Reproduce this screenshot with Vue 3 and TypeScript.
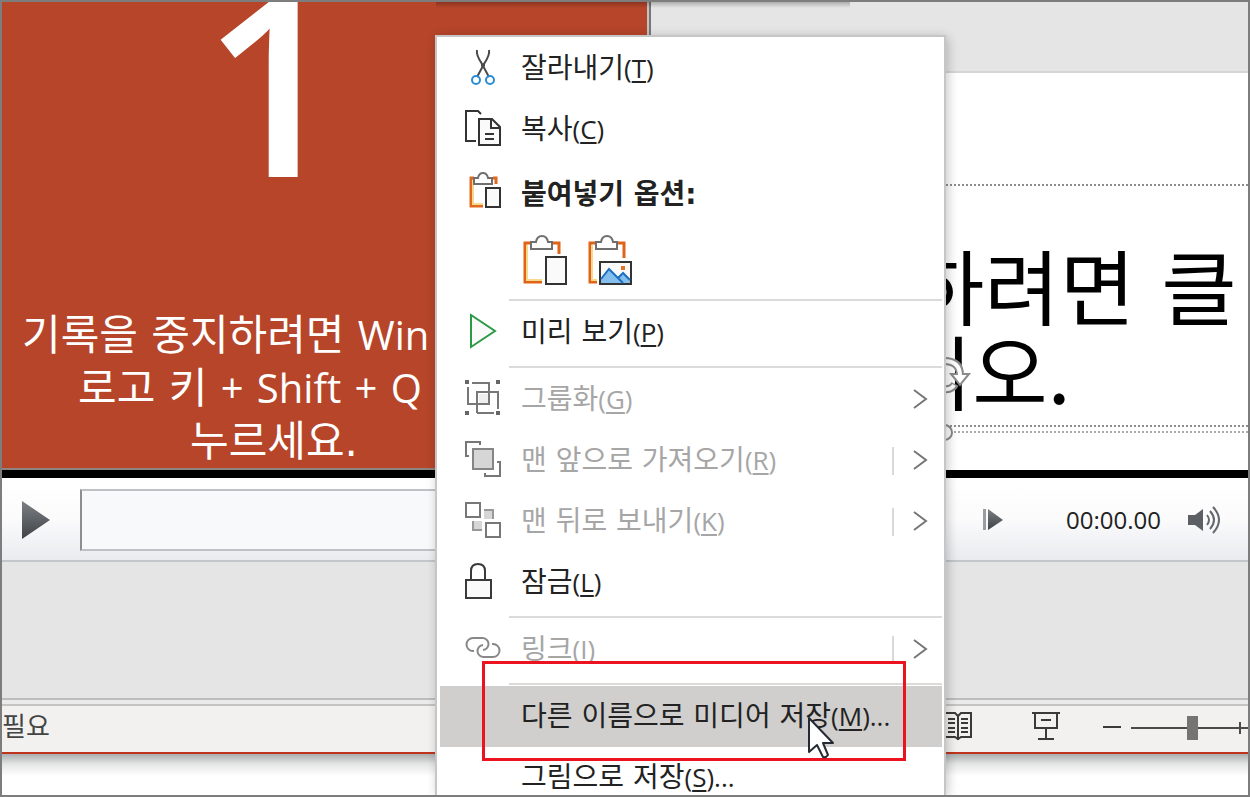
<script setup lang="ts">
import { ref } from 'vue'

interface MenuEntry {
  kind: 'item' | 'heading' | 'paste' | 'rule'
  icon?: string
  label?: string
  accel?: string
  tail?: string
  disabled?: boolean
  arrow?: boolean
  split?: boolean
  active?: boolean
}

const entries: MenuEntry[] = [
  { kind: 'item', icon: 'cut', label: '잘라내기', accel: 'T' },
  { kind: 'item', icon: 'copy', label: '복사', accel: 'C' },
  { kind: 'heading', icon: 'clipboard', label: '붙여넣기 옵션:' },
  { kind: 'paste' },
  { kind: 'rule' },
  { kind: 'item', icon: 'preview', label: '미리 보기', accel: 'P' },
  { kind: 'rule' },
  { kind: 'item', icon: 'group', label: '그룹화', accel: 'G', disabled: true, arrow: true },
  { kind: 'item', icon: 'front', label: '맨 앞으로 가져오기', accel: 'R', disabled: true, arrow: true, split: true },
  { kind: 'item', icon: 'back', label: '맨 뒤로 보내기', accel: 'K', disabled: true, arrow: true, split: true },
  { kind: 'item', icon: 'lock', label: '잠금', accel: 'L' },
  { kind: 'rule' },
  { kind: 'item', icon: 'link', label: '링크', accel: 'I', disabled: true, arrow: true, split: true },
  { kind: 'rule' },
  { kind: 'item', label: '다른 이름으로 미디어 저장', accel: 'M', tail: '...', active: true },
  { kind: 'item', label: '그림으로 저장', accel: 'S', tail: '...' },
]

const zoom = ref(53)
</script>

<template>
  <div class="window">
    <main class="stage">
      <section class="slide">
        <div class="count">1</div>
        <p class="notice">
          <span class="line first">기록을 중지하려면 <span class="latin">Win</span></span>
          <span class="line second">로고 키 <span class="latin">+</span> <span class="latin">Shift</span> <span class="latin">+</span> <span class="latin">Q</span></span>
          <span class="line third">누르세요.</span>
        </p>
      </section>
      <div class="divider"></div>
      <section class="canvas">
        <div class="canvas-gap"></div>
        <div class="page">
          <h1 class="title">
            <span class="title-line upper">하려면 클</span>
            <span class="title-line lower">시오.</span>
          </h1>
          <div class="page-edge"></div>
        </div>
      </section>
    </main>

    <div class="player">
      <button class="bare" type="button" aria-label="재생">
        <svg width="30" height="40" viewBox="0 0 30 40">
          <defs>
            <linearGradient id="tri" x1="0" y1="0" x2="0" y2="1">
              <stop offset="0" stop-color="#7c7f83" />
              <stop offset="1" stop-color="#3f4246" />
            </linearGradient>
          </defs>
          <path d="M1 1 L29 20 L1 39 Z" fill="url(#tri)" />
        </svg>
      </button>
      <div class="track"></div>
      <button class="bare" type="button" aria-label="앞으로">
        <svg width="22" height="24" viewBox="0 0 22 24">
          <rect x="1" y="1" width="3" height="21" fill="#9a9da0" />
          <path d="M6 1 L21 12 L6 22 Z" fill="url(#tri)" />
        </svg>
      </button>
      <time class="clock">00:00.00</time>
      <button class="bare" type="button" aria-label="음량">
        <svg width="36" height="28" viewBox="0 0 36 28">
          <path d="M1 9 H8 L16 3 V25 L8 19 H1 Z" fill="#5c6064" />
          <g fill="none" stroke="#65696d" stroke-width="2">
            <path d="M20 9 Q24 14 20 19" />
            <path d="M23 5 Q31 14 23 23" />
            <path d="M26 1 Q38 14 26 27" />
          </g>
        </svg>
      </button>
    </div>

    <div class="notes"></div>

    <footer class="status">
      <span class="status-text">필요</span>
      <div class="status-tools">
        <button class="bare" type="button" aria-label="읽기용 보기">
          <svg width="30" height="30" viewBox="0 0 30 30" fill="none" stroke="#3b3a39" stroke-width="2">
            <path d="M15 5 L12 2 H2 V26 H12 L15 28 L18 26 H28 V2 H18 Z M15 5 V29" />
            <path d="M5 8 H12 M5 12 H12 M5 17 H12 M5 21 H12 M18 8 H25 M18 12 H25 M18 17 H25 M18 21 H25" />
          </svg>
        </button>
        <button class="bare show" type="button" aria-label="슬라이드 쇼">
          <svg width="30" height="30" viewBox="0 0 30 30" fill="none" stroke="#3b3a39" stroke-width="2">
            <path d="M1 2 H29 M4 2 V17 H26 V2 M10 9 H20 M15 17 V28 M7 28 H23" />
          </svg>
        </button>
        <button class="bare minus" type="button" aria-label="축소">
          <svg width="18" height="30" viewBox="0 0 18 30"><path d="M0 16 H18" stroke="#3b3a39" stroke-width="2" /></svg>
        </button>
        <input v-model="zoom" class="zoom" type="range" min="0" max="100" aria-label="확대/축소" />
      </div>
    </footer>
    <div class="desktop"></div>

    <svg class="rotate" width="34" height="40" viewBox="0 0 34 40" fill="none">
      <path d="M6 5 Q22 5 22 19 M6 33 Q14 34 17 28" stroke="#8a8a8a" stroke-width="8" />
      <path d="M13 18 H31 L22 29 Z" fill="#fff" stroke="#8a8a8a" stroke-width="2" />
      <path d="M6 5 Q22 5 22 20 M6 33 Q13 34 16 29" stroke="#fff" stroke-width="4" />
    </svg>
    <div class="handle"></div>
    <div class="toolbar-shadow"></div>

    <nav class="menu" role="menu">
      <template v-for="(entry, i) in entries" :key="i">
        <div v-if="entry.kind === 'rule'" class="rule" role="separator"></div>

        <div v-else-if="entry.kind === 'paste'" class="paste-row">
          <button class="bare" type="button" aria-label="대상 테마 사용">
            <svg width="46" height="52" viewBox="0 0 46 52" fill="none" stroke-width="2">
              <path d="M10 9 H3 V48 H20 M30 9 H37 V20" stroke="#df6418" stroke-width="3" />
              <path d="M5 11 V46 H20" stroke="#f8d98c" />
              <path d="M9 8 H14 Q15 2 20 2 Q25 2 26 8 H30 V15 H9 Z" fill="#fff" stroke="#6f6f6f" />
              <rect x="24" y="23" width="20" height="27" fill="#fafafa" stroke="#333" />
            </svg>
          </button>
          <button class="bare" type="button" aria-label="그림">
            <svg width="46" height="52" viewBox="0 0 46 52" fill="none" stroke-width="2">
              <path d="M10 9 H3 V48 H10 M30 9 H37 V24" stroke="#df6418" stroke-width="3" />
              <path d="M5 11 V46 H10" stroke="#f8d98c" />
              <path d="M9 8 H14 Q15 2 20 2 Q25 2 26 8 H30 V15 H9 Z" fill="#fff" stroke="#6f6f6f" />
              <rect x="13" y="28" width="31" height="22" fill="#fafafa" stroke="#333" />
              <path d="M14 45 L22 35 L37 49 H14 Z" fill="#83beec" />
              <path d="M30 43 L37 40 L43 46 V49 H34 Z" fill="#83beec" />
              <path d="M14 45 L22 35 L36 49 M31 44 L36 39 L43 46" stroke="#1e6fc0" />
              <rect x="34" y="32" width="4" height="4" fill="#e8761f" />
            </svg>
          </button>
        </div>

        <component
          :is="entry.kind === 'heading' ? 'div' : 'button'"
          v-else
          class="row"
          :class="{ heading: entry.kind === 'heading', active: entry.active, off: entry.disabled }"
          :role="entry.kind === 'heading' ? undefined : 'menuitem'"
          :type="entry.kind === 'heading' ? undefined : 'button'"
          :disabled="entry.disabled || undefined"
        >
          <svg class="icon" width="36" height="36" viewBox="0 0 36 36" fill="none" stroke-width="2">
            <g v-if="entry.icon === 'cut'">
              <path d="M12 1 Q11 6 17 15 L24 28" stroke="#4a4a4a" />
              <path d="M24 1 Q25 6 19 15 L12 28" stroke="#4a4a4a" />
              <path d="M16 12 L18 15 L20 12 V17 L18 19 L16 17 Z" fill="#4a4a4a" />
              <g stroke="#2a8dd4" stroke-width="2">
                <circle cx="11" cy="31" r="4" />
                <circle cx="25" cy="31" r="4" />
              </g>
            </g>
            <g v-else-if="entry.icon === 'copy'" stroke="#333">
              <path d="M11 31 H1 V1 H13 L16 4" />
              <path d="M14 9 H27 L35 17 V35 H14 Z" fill="#fafafa" />
              <path d="M26 9 V18 H35 M20 24 H29 M20 29 H29" />
            </g>
            <g v-else-if="entry.icon === 'clipboard'">
              <path d="M9 6 H6 V34 H18 M28 6 H31 V12" stroke="#e0681f" stroke-width="3" />
              <path d="M8 8 V32 H18" stroke="#f8d98c" />
              <path d="M9 6 H13 Q14 1 18 1 Q22 1 23 6 H27 V12 H9 Z" fill="#fff" stroke="#6f6f6f" />
              <rect x="21" y="16" width="14" height="19" fill="#fafafa" stroke="#333" />
            </g>
            <path v-else-if="entry.icon === 'preview'" d="M6 2 L30 18 L6 34 Z" fill="#fafafa" stroke="#2b9a47" />
            <g v-else-if="entry.icon === 'group'" stroke="#777">
              <path d="M7 3 H24 V24 H3 V7" />
              <path d="M12 33 V12 H33 V29 M12 33 H29" />
              <rect x="14" y="14" width="9" height="9" fill="#eee" stroke="none" />
              <g fill="#666" stroke="none">
                <rect width="4" height="4" /><rect x="31" width="4" height="4" />
                <rect y="31" width="4" height="4" /><rect x="31" y="31" width="4" height="4" />
              </g>
            </g>
            <g v-else-if="entry.icon === 'front'" stroke="#777">
              <path d="M4 15 H1 V1 H15 V4 M32 21 H35 V35 H20 V32" />
              <rect x="8" y="8" width="20" height="20" fill="#d6d6d6" stroke="#858585" />
            </g>
            <g v-else-if="entry.icon === 'back'" stroke="#777">
              <rect x="19" y="8" width="9" height="9" fill="#d6d6d6" stroke="none" />
              <rect x="8" y="19" width="9" height="9" fill="#d6d6d6" stroke="none" />
              <path d="M19 8 H28 V17 M8 19 V28 H17" stroke="#999" />
              <rect x="1" y="1" width="14" height="14" fill="#fff" />
              <rect x="21" y="21" width="14" height="14" fill="#fff" />
            </g>
            <g v-else-if="entry.icon === 'lock'" stroke="#3b3a39">
              <path d="M6 17 V8 Q6 1 13 1 Q20 1 20 8 V17" />
              <rect x="1" y="17" width="25" height="18" fill="#fafafa" />
            </g>
            <g v-else-if="entry.icon === 'link'" stroke="#888">
              <path d="M9 21 H8 A6 6 0 0 1 8 8 H17 A6 6 0 0 1 18 20" />
              <path d="M27 14 H28 A6 6 0 0 1 28 27 H19 A6 6 0 0 1 18 15" />
            </g>
          </svg>
          <span class="label">{{ entry.label }}<span v-if="entry.accel" class="latin accel">(<u>{{ entry.accel }}</u>){{ entry.tail }}</span></span>
          <span v-if="entry.split" class="split"></span>
          <svg v-if="entry.arrow" class="chevron" width="16" height="22" viewBox="0 0 16 22">
            <path d="M2 1 L14 10 L2 19" fill="none" stroke="#767676" stroke-width="2" />
          </svg>
        </component>
      </template>
    </nav>

    <div class="callout"></div>
    <svg class="pointer" width="30" height="44" viewBox="0 0 30 44">
      <path d="M2 2 V36 L10 29 L16 41 Q19 42 21 39 L16 27 H26 Z" fill="#fff" stroke="#262a33" stroke-width="2" stroke-linejoin="round" />
    </svg>
  </div>
</template>

<style>
body {
  margin: 0;
}
</style>

<style scoped>
.window {
  position: relative;
  box-sizing: border-box;
  display: flex;
  flex-direction: column;
  height: 100vh;
  overflow: hidden;
  border: 2px solid #7d7d7d;
  background: #fff;
  color: #222;
  font-family: "DejaVu Sans", "Noto Sans CJK KR", sans-serif;
}

.latin {
  font-family: "Open Sans", "Noto Sans CJK KR", sans-serif;
  line-height: 1;
}

.bare {
  display: block;
  flex: none;
  padding: 0;
  border: 0;
  background: none;
}

.bare svg {
  display: block;
}

.stage {
  display: flex;
  flex: none;
  border-bottom: 8px solid #000;
}

.slide {
  box-sizing: border-box;
  width: 52%;
  height: 468px;
  overflow: hidden;
  border-bottom: 2px solid #8b8480;
  background: #b6452a;
  color: #fff;
}

.count {
  height: 307px;
  padding-left: 200px;
  font-family: "Open Sans", sans-serif;
  font-size: 250px;
  font-weight: 600;
  line-height: 156px;
}

.notice {
  margin: 0;
  font-family: "DejaVu Sans", "Noto Sans CJK KR", sans-serif;
  font-size: 42px;
  font-weight: 400;
  line-height: 53px;
  white-space: nowrap;
}

.notice .latin {
  font-size: 40px;
}

.line {
  display: block;
}

.first {
  padding-left: 20px;
}

.second {
  padding-left: 76px;
}

.third {
  padding-left: 188px;
}

.divider {
  width: 2px;
  margin-left: -3px;
  border-right: 2px solid #777;
  background: #c3c3c3;
}

.canvas {
  display: flex;
  flex: 1;
  flex-direction: column;
  min-width: 0;
}

.canvas-gap {
  height: 69px;
  border-bottom: 2px solid #d6d6d6;
  background: #e5e5e5;
}

.page {
  flex: 1;
  padding-top: 111px;
}

.title {
  height: 239px;
  margin: 0;
  border-top: 2px dotted #8d8d8d;
  border-bottom: 2px dotted #8d8d8d;
  color: #000;
  font-family: "Noto Sans CJK KR", sans-serif;
  font-size: 82px;
  font-weight: 400;
  line-height: 78px;
  white-space: nowrap;
}

.title-line {
  display: block;
}

.upper {
  padding: 66px 0 0 258px;
  font-family: "DejaVu Sans", "Noto Sans CJK KR", sans-serif;
}

.lower {
  padding-left: 246px;
}

.page-edge {
  height: 4px;
  border-bottom: 2px dotted #aaa;
}

.player {
  box-sizing: border-box;
  display: flex;
  flex: none;
  align-items: center;
  height: 84px;
  padding: 2px 25px 0 19px;
  border-bottom: 2px solid #c3c6ca;
  background: linear-gradient(#fff, #fbfbfc 50%, #e9ebee);
}

.track {
  box-sizing: border-box;
  flex: 1;
  height: 62px;
  margin: 0 50px 0 29px;
  border: 2px solid #bfc2c5;
  border-left-color: #8c8e90;
  background: #f7f9fb;
}

.clock {
  margin: 0 26px 0 62px;
  font-family: "Open Sans", sans-serif;
  font-size: 24px;
  line-height: 32px;
}

.notes {
  flex: none;
  height: 136px;
  background: #e5e5e5;
}

.status {
  box-sizing: border-box;
  display: flex;
  flex: none;
  align-items: center;
  justify-content: space-between;
  height: 56px;
  border-top: 2px solid #bdbdbd;
  border-bottom: 2px solid #c0341d;
  background: linear-gradient(#ebebeb 4px, #c6c4c3 4px, #c6c4c3 6px, #f2f1ef 6px);
}

.status-text {
  padding-bottom: 3px;
  color: #444;
  font-family: "Noto Sans CJK KR", sans-serif;
  font-size: 26px;
  line-height: 32px;
}

.status-tools {
  display: flex;
  align-items: center;
}

.show {
  margin-left: 58px;
}

.minus {
  margin: 0 10px 0 42px;
}

.zoom {
  width: 117px;
  height: 30px;
  margin: 4px 0 0;
  appearance: none;
  background:
    linear-gradient(#4a4a4a, #4a4a4a) 108px 50% / 2px 12px no-repeat,
    linear-gradient(#4a4a4a, #4a4a4a) 0 50% / 100% 2px no-repeat;
}

.zoom::-webkit-slider-thumb {
  width: 11px;
  height: 24px;
  appearance: none;
  background: #757472;
}

.desktop {
  flex: 1;
  background: linear-gradient(#a9aeae, #e4e5e5 10px, #fff 22px);
}

.rotate {
  position: absolute;
  top: 354px;
  left: 936px;
}

.handle {
  position: absolute;
  top: 422px;
  left: 934px;
  width: 13px;
  height: 13px;
  border: 2px solid #8a8a8a;
  border-radius: 50%;
  background: #fff;
}

.toolbar-shadow {
  position: absolute;
  top: 0;
  left: 434px;
  width: 414px;
  height: 6px;
  background: linear-gradient(rgba(0, 0, 0, 0.24), rgba(0, 0, 0, 0));
}

.menu {
  position: absolute;
  top: 33px;
  bottom: 0;
  left: 433px;
  box-sizing: border-box;
  width: 511px;
  padding: 1px 2px 0 3px;
  overflow: hidden;
  border: 2px solid #c6c6c6;
  border-bottom: 0;
  background: #fff;
  box-shadow: 2px 2px 10px rgba(0, 0, 0, 0.22);
}

.row {
  box-sizing: border-box;
  display: flex;
  align-items: center;
  width: 100%;
  height: 61px;
  padding: 0 14px 0 25px;
  border: 0;
  background: none;
  color: #222;
  font-family: "DejaVu Sans", "Noto Sans CJK KR", sans-serif;
  font-size: 28px;
  font-weight: 400;
  line-height: 40px;
  text-align: left;
  white-space: nowrap;
}

.icon {
  flex: none;
  margin: 0 20px 3px 0;
}

.label {
  flex: 1;
}

.accel {
  font-size: 26px;
}

.accel u {
  text-decoration-thickness: 2px;
  text-underline-offset: 3px;
}

.off {
  color: #a6a6a6;
}

.heading {
  height: 66px;
  padding-top: 3px;
  font-weight: 700;
}

.heading .icon {
  margin-bottom: 9px;
}

.active {
  background: #d0cfcd;
}

.split {
  width: 2px;
  height: 28px;
  margin-right: 18px;
  background: #dcd8d8;
}

.paste-row {
  display: flex;
  align-items: flex-start;
  gap: 19px;
  height: 62px;
  padding: 8px 0 0 82px;
}

.rule {
  height: 2px;
  margin: 3px 0 1px 69px;
  background: #dddbd9;
}

.callout {
  position: absolute;
  top: 659px;
  left: 480px;
  box-sizing: border-box;
  width: 424px;
  height: 100px;
  border: 3px solid #ec1320;
}

.pointer {
  position: absolute;
  top: 714px;
  left: 805px;
}
</style>
